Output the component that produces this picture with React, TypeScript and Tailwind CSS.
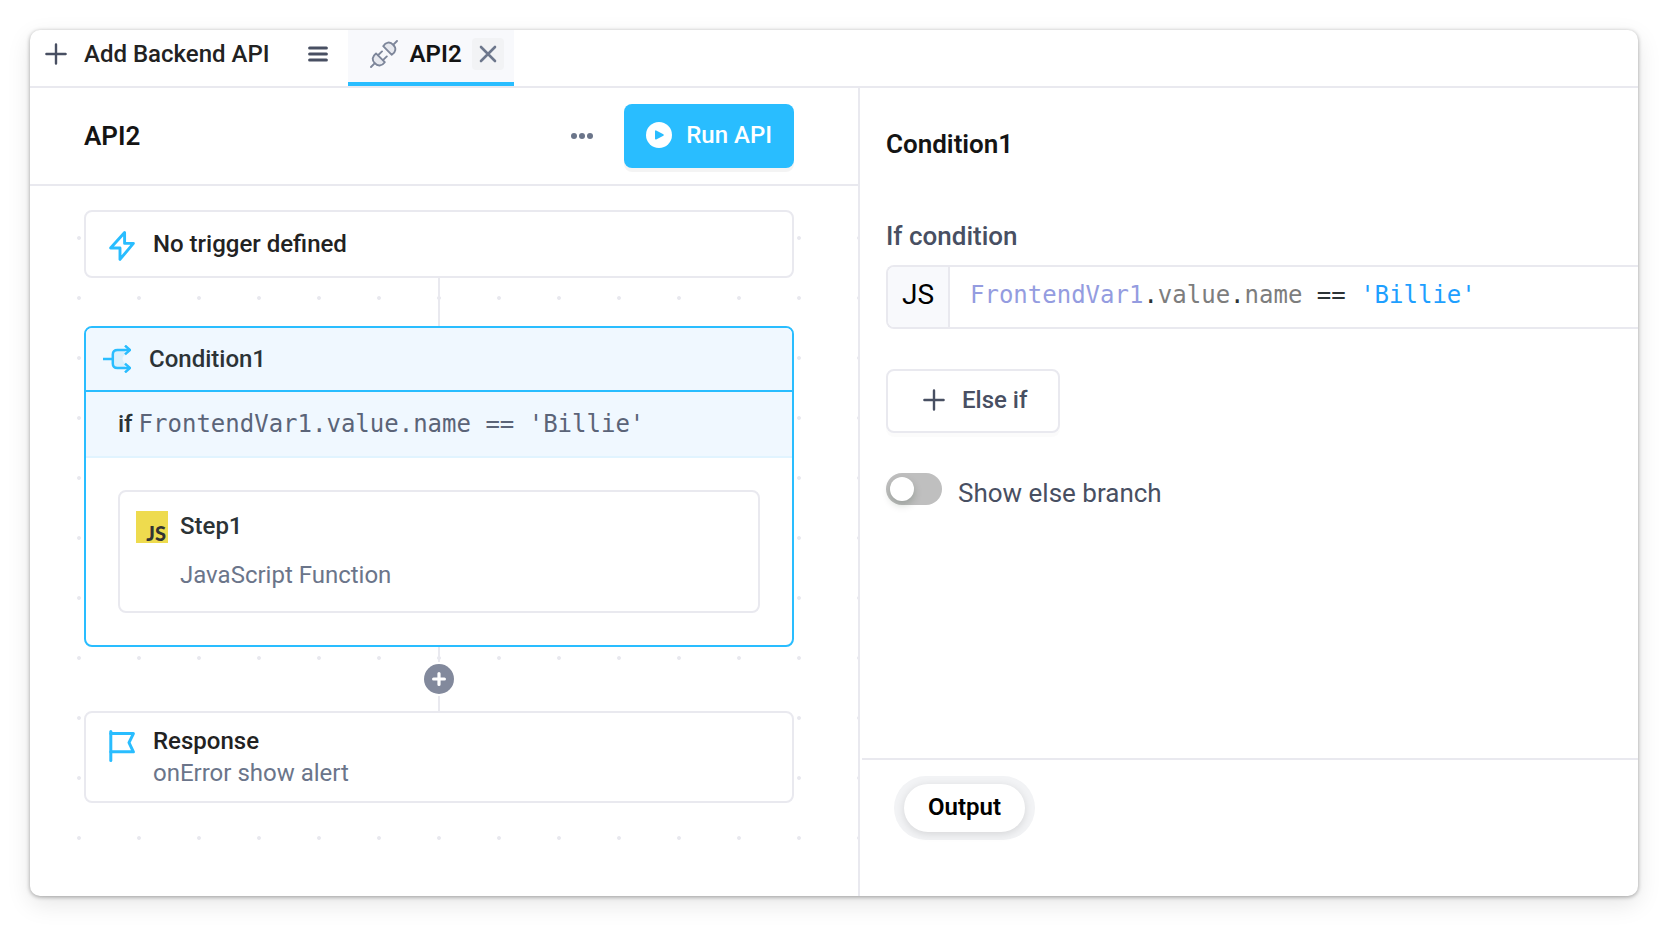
import React, { useState } from "react";

function PlusIcon() {
  return (
    <svg className="size-[22px] shrink-0" viewBox="0 0 22 22" fill="none" stroke="#484f62" strokeWidth="2.4" strokeLinecap="round" aria-hidden="true">
      <path d="M11 1.400v19.200M1.400 11h19.200" />
    </svg>
  );
}

function MenuIcon() {
  return (
    <svg className="size-5" viewBox="0 0 20 20" fill="none" stroke="#484f62" strokeWidth="3" strokeLinecap="round" aria-hidden="true">
      <path d="M1.600 4h16.800M1.600 10h16.800M1.600 16h16.800" />
    </svg>
  );
}

function PlugIcon() {
  return (
    <svg className="size-7 shrink-0" viewBox="0 0 28 28" fill="none" stroke="#7d869a" strokeWidth="1.900" strokeLinecap="round" strokeLinejoin="round" aria-hidden="true">
      <path d="M13.200 6.200C15.600 2.200 20 1.200 23.200 4.800C26.600 8 25.800 12.400 21.800 14.800Z" fill="#e7e9ef" />
      <path d="M23.400 4.600L27 1" />
      <path d="M6 13.400L14.800 22.200C11.800 26.400 7.600 26.400 4.800 23.200C1.800 20.200 1.800 16.600 6 13.400Z" fill="#e7e9ef" />
      <path d="M4.600 23.400L1 27M8 15.200L12 11.400M13 20.200L16.800 16.400" />
    </svg>
  );
}

function CloseIcon() {
  return (
    <svg className="size-[18px]" viewBox="0 0 18 18" fill="none" stroke="#6d778c" strokeWidth="2.600" strokeLinecap="round" aria-hidden="true">
      <path d="M2 2l14 14M16 2L2 16" />
    </svg>
  );
}

function DotsIcon() {
  return (
    <svg className="h-6 w-[22px]" viewBox="0 0 22 24" fill="#6b758a" aria-hidden="true">
      <circle cx="3" cy="12" r="3" />
      <circle cx="11" cy="12" r="3" />
      <circle cx="19" cy="12" r="3" />
    </svg>
  );
}

function PlayIcon() {
  return (
    <svg className="size-[26px] shrink-0" viewBox="0 0 26 26" aria-hidden="true">
      <circle cx="13" cy="13" r="13" fill="#fff" />
      <path d="M9.800 9.200v7.600l7.200-3.800z" fill="#29bdff" stroke="#29bdff" strokeWidth="1.600" strokeLinejoin="round" />
    </svg>
  );
}

function BoltIcon() {
  return (
    <svg className="h-[30px] w-[26px] shrink-0" viewBox="0 0 26 30" fill="none" stroke="#29bdff" strokeWidth="2.900" strokeLinejoin="round" aria-hidden="true">
      <path d="M15.600 1.600V12.400H24.400L11 28.400V17H1.600Z" />
    </svg>
  );
}

function BranchIcon() {
  return (
    <svg className="size-7 shrink-0" viewBox="0 0 28 28" fill="none" stroke="#29bdff" strokeWidth="2.500" aria-hidden="true">
      <path d="M10 5H22V9.500Q17 14 22 18.500V23H10Z" fill="#daf0fc" stroke="none" />
      <path d="M0 14H9.800" />
      <path d="M27 5H14.500Q9.800 5 9.800 9.500V18.500Q9.800 23 14.500 23H27" />
      <path d="M22 .6L27 5L22 9.400M22 18.600L27 23L22 27.400" />
    </svg>
  );
}

function FlagIcon() {
  return (
    <svg className="h-8 w-[26px] shrink-0" viewBox="0 0 26 32" fill="none" stroke="#29bdff" strokeWidth="3" strokeLinecap="round" strokeLinejoin="round" aria-hidden="true">
      <path d="M1.800 1.600V30.400" />
      <path d="M1.800 3.600H24.400L20 12.600L24.400 21.800H1.800" />
    </svg>
  );
}

function Tabs() {
  return (
    <nav className="flex h-[58px] shrink-0 items-start border-b-2 border-[#e9e9ef]">
      <button className="flex h-12 items-center gap-[17px] pl-[15px] text-2xl font-medium text-[#222]">
        <PlusIcon />
        Add Backend API
      </button>
      <button aria-label="API list" className="ml-[38px] flex h-12 items-center">
        <MenuIcon />
      </button>
      <div className="ml-5 flex h-14 items-start border-b-4 border-[#29bdff] bg-[#f8f9fc] pr-[10px] pl-[22px]">
        <a href="#api2" className="flex h-12 items-center gap-3 text-2xl font-semibold text-[#141414]">
          <PlugIcon />
          API2
        </a>
        <button aria-label="Close API2" className="mt-2 ml-[10px] flex size-8 items-center justify-center rounded bg-[#f2f3f5]">
          <CloseIcon />
        </button>
      </div>
    </nav>
  );
}

function Flow() {
  return (
    <div className="flex flex-1 flex-col bg-[radial-gradient(circle,#e8e8ee_1.500px,transparent_2.300px)] bg-size-[60px_60px] bg-position-[19px_22px] pt-6 pr-16 pb-16 pl-[54px]">
      <section className="flex h-[68px] items-center gap-[18px] rounded-lg border-2 border-[#e9e9ef] bg-white pl-[23px]">
        <div className="pt-1">
          <BoltIcon />
        </div>
        <h2 className="text-2xl font-medium text-[#222]">No trigger defined</h2>
      </section>
      <div className="h-12 w-0.5 self-center bg-[#e9e9ef]" />
      <section className="overflow-hidden rounded-lg border-2 border-[#29bdff] bg-white">
        <div className="flex h-16 items-center gap-[18px] border-b-2 border-[#29bdff] bg-[#f0f8ff] pl-[17px]">
          <BranchIcon />
          <h2 className="text-2xl font-medium text-[#2c3336]">Condition1</h2>
        </div>
        <div className="flex h-[66px] items-center gap-1.5 border-b-2 border-[#e1f4ff] bg-[#f0f8ff] pl-8 text-2xl text-[#2c3336]">
          <span className="font-medium">if</span>
          <code className="font-['DejaVu_Sans_Mono',monospace] whitespace-pre text-[#5b6478]">FrontendVar1.value.name == 'Billie'</code>
        </div>
        <div className="p-8">
          <div className="flex gap-3 rounded-lg border-2 border-[#e9e9ef] px-4 pt-[18px] pb-5">
            <div className="mt-px flex size-8 shrink-0 items-end justify-end bg-[#eedb4e] pr-0.5 font-['Lato',sans-serif] text-xl leading-5 font-black text-[#333]">
              JS
            </div>
            <div className="leading-8">
              <h3 className="text-2xl leading-8 font-medium text-[#2c3336]">Step1</h3>
              <p className="mt-[17px] text-2xl leading-8 text-[#6b758a]">JavaScript Function</p>
            </div>
          </div>
        </div>
      </section>
      <div className="flex flex-col items-center gap-0.5">
        <div className="h-[15px] w-0.5 bg-[#e9e9ef]" />
        <button aria-label="Add step" className="flex size-[30px] items-center justify-center rounded-full bg-[#82899c]">
          <svg className="size-[14px]" viewBox="0 0 14 14" stroke="#fff" strokeWidth="3.200" strokeLinecap="round" aria-hidden="true">
            <path d="M7 1.600v10.800M1.600 7h10.800" />
          </svg>
        </button>
        <div className="h-[15px] w-0.5 bg-[#e9e9ef]" />
      </div>
      <section className="flex gap-[18px] rounded-lg border-2 border-[#e9e9ef] bg-white py-3 pl-[23px]">
        <div className="pt-[5px]">
          <FlagIcon />
        </div>
        <div>
          <h2 className="text-2xl leading-8 font-medium text-[#222]">Response</h2>
          <p className="text-2xl leading-8 text-[#6b758a]">onError show alert</p>
        </div>
      </section>
    </div>
  );
}

function Inspector() {
  const [showElse, setShowElse] = useState(false);
  return (
    <aside className="flex min-w-0 flex-col">
      <div className="flex flex-1 flex-col pt-10 pl-[26px]">
        <h2 className="text-[26px] leading-8 font-semibold text-[#141414]">Condition1</h2>
        <h3 id="if-condition" className="mt-[60px] text-[26px] leading-8 font-medium text-[#484f62]">If condition</h3>
        <div className="mt-[13px] flex h-16 rounded-l-lg border-2 border-r-0 border-[#e9e9ef]">
          <span className="flex w-[62px] items-center justify-center rounded-l-md border-r-2 border-[#e9e9ef] bg-[#f8f9fc] pb-1 text-[28px] text-black">JS</span>
          <div
            role="textbox"
            aria-labelledby="if-condition"
            contentEditable
            suppressContentEditableWarning
            className="flex-1 overflow-hidden pt-3 pl-5 font-['DejaVu_Sans_Mono',monospace] text-2xl leading-8 whitespace-pre text-[#2c3336] outline-none"
          >
            <span className="text-[#949ce0]">FrontendVar1</span>.<span className="text-[#7d7d7d]">value</span>.<span className="text-[#7d7d7d]">name</span> == <span className="text-[#1e9fff]">'Billie'</span>
          </div>
        </div>
        <button className="mt-10 flex h-16 items-center gap-[17px] self-start rounded-lg border-2 border-[#e9e9ef] bg-white pr-[31px] pb-0.5 pl-[35px] text-2xl font-medium text-[#484f62] shadow-[0_4px_0_rgba(0,0,0,0.015)]">
          <PlusIcon />
          Else if
        </button>
        <label className="mt-10 flex items-start gap-4 self-start text-[26px] leading-8 text-[#484f62]">
          <input
            type="checkbox"
            role="switch"
            checked={showElse}
            onChange={(e) => setShowElse(e.target.checked)}
            className="flex h-8 w-14 appearance-none rounded-full bg-[#bfbfbf] p-1 before:size-6 before:rounded-full before:bg-white before:shadow-[0_4px_8px_rgba(0,35,11,0.2)] checked:justify-end checked:bg-[#29bdff]"
          />
          <span className="pt-1">Show else branch</span>
        </label>
      </div>
      <div className="ml-0.5 h-[138px] border-t-2 border-[#e9e9ef] pt-4 pl-8">
        <div className="inline-flex rounded-full bg-[#f2f3f5] px-[10px] py-2">
          <button className="h-12 rounded-full bg-white px-6 pb-0.5 text-2xl font-semibold text-black shadow-[0_2px_8px_rgba(0,0,0,0.12)]">Output</button>
        </div>
      </div>
    </aside>
  );
}

export default function App() {
  return (
    <div className="flex min-h-screen flex-col bg-white p-[30px] font-['Roboto',sans-serif]">
      <main className="flex flex-1 flex-col overflow-hidden rounded-[10px] bg-white shadow-[0_1px_4px_rgba(0,0,0,0.35),0_8px_24px_rgba(0,0,0,0.1)]">
        <Tabs />
        <div className="grid flex-1 grid-cols-[830fr_778fr]">
          <div className="flex min-w-0 flex-col border-r-2 border-[#e9e9ef]">
            <header className="flex h-[98px] items-center border-b-2 border-[#e9e9ef] pr-16 pl-[54px]">
              <h1 className="flex-1 text-[26px] font-semibold text-[#141414]">API2</h1>
              <button aria-label="More options" className="mr-[31px]">
                <DotsIcon />
              </button>
              <button className="flex h-16 items-center gap-[14px] rounded-lg bg-[#29bdff] px-[22px] pb-0.5 text-2xl font-medium text-white shadow-[0_4px_0_rgba(0,0,0,0.045)]">
                <PlayIcon />
                Run API
              </button>
            </header>
            <Flow />
          </div>
          <Inspector />
        </div>
      </main>
    </div>
  );
}
